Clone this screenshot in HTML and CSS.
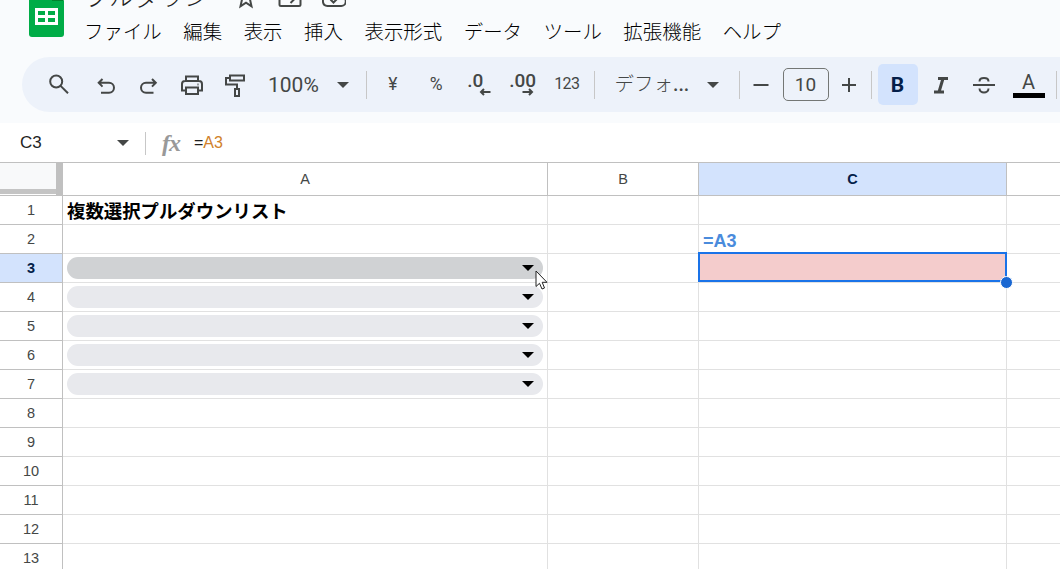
FILE: index.html
```html
<!DOCTYPE html>
<html lang="ja">
<head>
  <meta charset="UTF-8">
  <meta name="viewport" content="width=device-width, initial-scale=1.0">
  <title>プルダウン</title>
  <link rel="stylesheet" href="styles.css">
</head>
<body>
  <header class="header">
    <svg class="logo" viewBox="0 0 35 48">
      <path d="M3 0H23L35 12V45a3 3 0 0 1-3 3H3a3 3 0 0 1-3-3V3a3 3 0 0 1 3-3z" fill="#00ac47"/>
      <path d="M23 0L35 12H23z" fill="#00832d"/>
      <path d="M6 19H29V36H6z M9 22V26H16V22z M19 22V26H26V22z M9 29V33H16V29z M19 29V33H26V29z" fill="#fff" fill-rule="evenodd"/>
    </svg>
    <div class="header-main">
      <div class="title-row">
        <span class="title">プルダウン</span>
        <svg class="title-icon" viewBox="0 0 24 24"><path d="M12 2.5l2.500 6.600 6.500.600-5 4.700 1.500 7L12 17.700 6.500 21.400l1.500-7L3 9.700l6.500-.6z"/></svg>
        <svg class="title-icon" viewBox="0 0 24 24"><path d="M1.500 4v15.500a1.500 1.500 0 0 0 1.500 1.500h18a1.500 1.500 0 0 0 1.500-1.500V6.500h-10.500l-2-2.500z M6.500 14h10 M12.500 10l4 4-4 4"/></svg>
        <svg class="title-icon" viewBox="0 0 24 24"><path d="M5.500 21a5 5 0 0 1-.5-9.900A7.500 7.500 0 0 1 19.500 12a4.500 4.500 0 0 1-.5 9z M8.500 14.500l3 3 5-5"/></svg>
      </div>
      <nav class="menu">
        <span>ファイル</span>
        <span>編集</span>
        <span>表示</span>
        <span>挿入</span>
        <span>表示形式</span>
        <span>データ</span>
        <span>ツール</span>
        <span>拡張機能</span>
        <span>ヘルプ</span>
      </nav>
    </div>
  </header>

  <div class="toolbar">
    <div class="tool search"><svg viewBox="0 0 24 24"><circle cx="9.200" cy="8.500" r="6"/><path d="M13.600 12.900L21 20.300"/></svg></div>
    <div class="tool"><svg viewBox="0 0 24 24"><path d="M8.500 6L4.700 9.800l3.800 3.800 M5 9.800h10a4.600 4.600 0 0 1 0 10H7"/></svg></div>
    <div class="tool"><svg viewBox="0 0 24 24"><path d="M15 6l3.800 3.800-3.800 3.800 M18.500 9.800H9a4.600 4.600 0 0 0 0 10h7.500"/></svg></div>
    <div class="tool"><svg viewBox="0 0 24 24"><path d="M6 8V3.500h12v4.500 M6 17.500H2V11a3 3 0 0 1 3-3h14a3 3 0 0 1 3 3v6.500h-4 M6 14.500h12v6.500H6z"/><path d="M17.500 11.500h1"/></svg></div>
    <div class="tool"><svg viewBox="0 0 24 24"><path d="M7 2.500h14v5H7z M7 5H3v6.500h11v4 M12 16h4v7h-4z"/></svg></div>
    <div class="zoom-select"><span>100%</span><i class="caret"></i></div>
    <i class="sep"></i>
    <div class="tool format yen">¥</div>
    <div class="tool format percent">%</div>
    <div class="tool format decimal">
      <span class="one">.0</span>
      <svg class="arrow" viewBox="0 0 12 8"><path d="M11.500 4H2 M5 1L2 4l3 3"/></svg>
    </div>
    <div class="tool format decimal">
      <span>.00</span>
      <svg class="arrow arrow-right" viewBox="0 0 12 8"><path d="M.5 4H10 M7 1l3 3-3 3"/></svg>
    </div>
    <div class="tool format number">123</div>
    <i class="sep sep-font"></i>
    <div class="font-select"><span>デフォ<b>...</b></span><i class="caret"></i></div>
    <i class="sep"></i>
    <div class="tool"><svg viewBox="0 0 24 24"><path d="M4.500 12h15"/></svg></div>
    <div class="font-size">10</div>
    <div class="tool plus"><svg viewBox="0 0 24 24"><path d="M5 12h14 M12 5v14"/></svg></div>
    <i class="sep sep-plus"></i>
    <div class="tool bold">B</div>
    <div class="tool style"><svg viewBox="0 0 24 24"><path class="thick" d="M10 5.500h10 M6 19h10 M15 5.500L11 19"/></svg></div>
    <div class="tool style"><svg viewBox="0 0 24 24"><path d="M1 12h22 M7.500 8.500c0-4.600 9-4.600 9 0 M7.500 15.500c0 5.400 9 5.400 9 0"/></svg></div>
    <div class="tool style text-color"><span>A</span></div>
    <i class="sep sep-last"></i>
  </div>

  <div class="formula-bar">
    <div class="name-box"><span>C3</span><i class="caret"></i></div>
    <i class="formula-sep"></i>
    <span class="fx">fx</span>
    <span class="formula">=<span class="ref">A3</span></span>
  </div>

  <div class="grid">
    <div class="corner"></div>
    <div class="col-head">A</div>
    <div class="col-head">B</div>
    <div class="col-head active">C</div>
    <div class="col-head"></div>

    <div class="row-head">1</div><div class="cell heading">複数選択プルダウンリスト</div><div class="cell"></div><div class="cell"></div><div class="cell"></div>
    <div class="row-head">2</div><div class="cell"></div><div class="cell"></div><div class="cell note">=A3</div><div class="cell"></div>
    <div class="row-head active">3</div>
    <div class="cell"><div class="chip hover"><i class="caret"></i></div>
      <svg class="cursor" viewBox="0 0 14 20"><path d="M1 1V16.500L4.500 13.300 7 19 9.500 18 7.200 12.300H12z"/></svg>
    </div>
    <div class="cell"></div>
    <div class="cell selected"><div class="selection"></div><div class="handle"></div></div>
    <div class="cell"></div>
    <div class="row-head">4</div><div class="cell"><div class="chip"><i class="caret"></i></div></div><div class="cell"></div><div class="cell"></div><div class="cell"></div>
    <div class="row-head">5</div><div class="cell"><div class="chip"><i class="caret"></i></div></div><div class="cell"></div><div class="cell"></div><div class="cell"></div>
    <div class="row-head">6</div><div class="cell"><div class="chip"><i class="caret"></i></div></div><div class="cell"></div><div class="cell"></div><div class="cell"></div>
    <div class="row-head">7</div><div class="cell"><div class="chip"><i class="caret"></i></div></div><div class="cell"></div><div class="cell"></div><div class="cell"></div>
    <div class="row-head">8</div><div class="cell"></div><div class="cell"></div><div class="cell"></div><div class="cell"></div>
    <div class="row-head">9</div><div class="cell"></div><div class="cell"></div><div class="cell"></div><div class="cell"></div>
    <div class="row-head">10</div><div class="cell"></div><div class="cell"></div><div class="cell"></div><div class="cell"></div>
    <div class="row-head">11</div><div class="cell"></div><div class="cell"></div><div class="cell"></div><div class="cell"></div>
    <div class="row-head">12</div><div class="cell"></div><div class="cell"></div><div class="cell"></div><div class="cell"></div>
    <div class="row-head">13</div><div class="cell"></div><div class="cell"></div><div class="cell"></div><div class="cell"></div>
  </div>
</body>
</html>
```
FILE: styles.css
```css
* {
  box-sizing: border-box;
}

body {
  margin: 0;
  height: 569px;
  overflow: hidden;
  background-color: #f9fbfd;
  font-family: "Liberation Sans", "Noto Sans CJK JP", sans-serif;
  color: #1f1f1f;
}

svg {
  display: block;
  fill: none;
  stroke: #444746;
  stroke-width: 2;
}

.caret {
  width: 0;
  height: 0;
  border-left: 6px solid transparent;
  border-right: 6px solid transparent;
  border-top: 6px solid #444746;
}

/* Title and menus, scrolled partly off the top */
.header {
  display: flex;
  height: 57px;
  overflow: hidden;
}

.logo {
  width: 35px;
  height: 48px;
  margin: -11px 20px 0 29px;
  flex: none;
  stroke: none;
}

.title-row {
  display: flex;
  height: 32px;
  margin-top: -19px;
  align-items: center;
}

.title {
  width: 150px;
  margin-top: -4px;
  font-family: "Noto Sans CJK JP", sans-serif;
  font-size: 25px;
  font-weight: 300;
  line-height: 32px;
}

.title-icon {
  width: 24px;
  height: 24px;
  margin-right: 20px;
}

.menu {
  display: flex;
  gap: 21.500px;
  height: 34px;
  align-items: center;
  font-family: "Noto Sans CJK JP", sans-serif;
  font-size: 19.450px;
  font-weight: 300;
  color: #000;
  white-space: nowrap;
}

/* Toolbar */
.toolbar {
  display: flex;
  align-items: center;
  height: 55px;
  margin-left: 22px;
  padding-left: 16px;
  border-radius: 28px 0 0 28px;
  background-color: #edf2fa;
  overflow: hidden;
  font-family: Roboto, "Noto Sans CJK JP", sans-serif;
  color: #444746;
}

.toolbar > * {
  flex: none;
}

.tool {
  display: flex;
  justify-content: center;
  align-items: center;
  width: 43px;
  height: 41px;
}

.tool svg {
  width: 24px;
  height: 24px;
}

.search {
  width: 42px;
  margin-right: 4px;
}

.sep {
  width: 1px;
  height: 28px;
  background-color: #c7c7c7;
}

.zoom-select {
  display: flex;
  align-items: center;
  justify-content: space-between;
  width: 110px;
  padding: 0 17px 0 12px;
  font-size: 21px;
}

.yen {
  margin-left: 4px;
}

.format {
  width: 43.500px;
  padding-bottom: 2px;
  font-size: 17.500px;
}

.tool.number {
  font-size: 16px;
  letter-spacing: -.6px;
}

.tool.decimal {
  flex-direction: column;
  justify-content: flex-start;
  padding-top: 7px;
  font-size: 19px;
  font-weight: 500;
}

.decimal span {
  line-height: 20px;
  margin-right: 1px;
}

.decimal .one {
  margin-right: 9px;
}

.tool .arrow {
  width: 12px;
  height: 8px;
  margin: -3px 0 0 10px;
}

.tool .arrow-right {
  margin-left: 10px;
}

.sep-font {
  margin-left: 5px;
}

.font-select {
  display: flex;
  align-items: center;
  justify-content: space-between;
  width: 144px;
  padding: 0 20px;
  font-size: 19.500px;
  font-weight: 300;
}

.font-select span {
  margin-top: -4px;
}

.font-select b {
  font-weight: 500;
}

.font-size {
  width: 46px;
  height: 33px;
  border: 1px solid #747775;
  border-radius: 5px;
  font-size: 19px;
  line-height: 31px;
  text-align: center;
}

.plus {
  width: 40px;
}

.sep-plus {
  margin: 0 6px 0 2px;
}

.bold {
  width: 40px;
  border-radius: 5px;
  background-color: #d3e3fd;
  color: #041e49;
  font-size: 21px;
  font-weight: 700;
}

.style {
  width: 44px;
}

.thick {
  stroke-width: 3;
}

.text-color {
  padding-left: 2px;
  font-size: 20px;
}

.text-color span {
  width: 32px;
  height: 33px;
  margin-top: -7px;
  padding-top: 6px;
  border-bottom: 5px solid #000;
  line-height: 23px;
  text-align: center;
}

.sep-last {
  margin-left: 6px;
}

/* Formula bar */
.formula-bar {
  display: flex;
  align-items: center;
  height: 40px;
  margin-top: 11px;
  background-color: #fff;
  font-size: 17px;
}

.name-box {
  display: flex;
  align-items: center;
  justify-content: space-between;
  width: 145px;
  padding: 0 16px 0 20px;
}

.formula-sep {
  width: 1px;
  height: 23px;
  background-color: #c7c7c7;
}

.fx {
  width: 48px;
  padding-left: 16px;
  color: #999;
  font-family: "Liberation Serif", serif;
  font-size: 24px;
  font-style: italic;
  font-weight: 700;
  letter-spacing: -1px;
}

.formula {
  font-size: 16px;
}

.ref {
  color: #d0812b;
}

/* Sheet */
.grid {
  display: grid;
  grid-template-columns: 63px 485px 151px 308px 60px;
  grid-template-rows: 34px;
  grid-auto-rows: 29px;
  margin-top: -1px;
  background-color: #fff;
}

.corner {
  border: solid #c0c0c0;
  border-width: 1px 7px 1px 0;
  background: linear-gradient(#f8f9fa 26px, #c4c4c4 26px, #c4c4c4 31px, #fff 31px);
}

.col-head,
.row-head {
  display: flex;
  justify-content: center;
  align-items: center;
  padding-bottom: 1px;
  border-right: 1px solid #c0c0c0;
  border-bottom: 1px solid #c0c0c0;
  color: #444746;
  font-size: 14.500px;
}

.col-head {
  border-top: 1px solid #c0c0c0;
}

.active {
  background-color: #d3e3fd;
  color: #041e49;
  font-weight: 700;
}

.cell {
  position: relative;
  padding: 3px 4px;
  border-right: 1px solid #e1e1e1;
  border-bottom: 1px solid #e1e1e1;
}

.heading {
  padding-top: 1px;
  color: #000;
  font-family: "Noto Sans CJK JP", sans-serif;
  font-size: 18.400px;
  font-weight: 700;
  line-height: 26px;
}

.note {
  color: #4a8bdc;
  font-size: 18px;
  font-weight: 700;
  line-height: 26px;
}

.chip {
  display: flex;
  align-items: center;
  justify-content: flex-end;
  height: 22px;
  padding-right: 9px;
  border-radius: 11px;
  background-color: #e8e9ed;
}

.chip.hover {
  background-color: #d0d2d4;
}

.chip .caret {
  border-top-color: #000;
}

.cursor {
  position: absolute;
  left: 472px;
  top: 16px;
  z-index: 2;
  width: 14px;
  height: 20px;
  fill: #fff;
  stroke: #222;
  stroke-width: 1;
}

.selected {
  background-color: #f4cccc;
}

/* Outline and fill handle sit over the cell borders */
.selection {
  position: absolute;
  left: -1px;
  top: -2px;
  width: 309px;
  height: 30px;
  border: 2px solid #1a73e8;
}

.handle {
  position: absolute;
  right: -7px;
  bottom: -7px;
  z-index: 1;
  width: 13px;
  height: 13px;
  border: 1px solid #fff;
  border-radius: 50%;
  background-color: #1967d2;
}
```
